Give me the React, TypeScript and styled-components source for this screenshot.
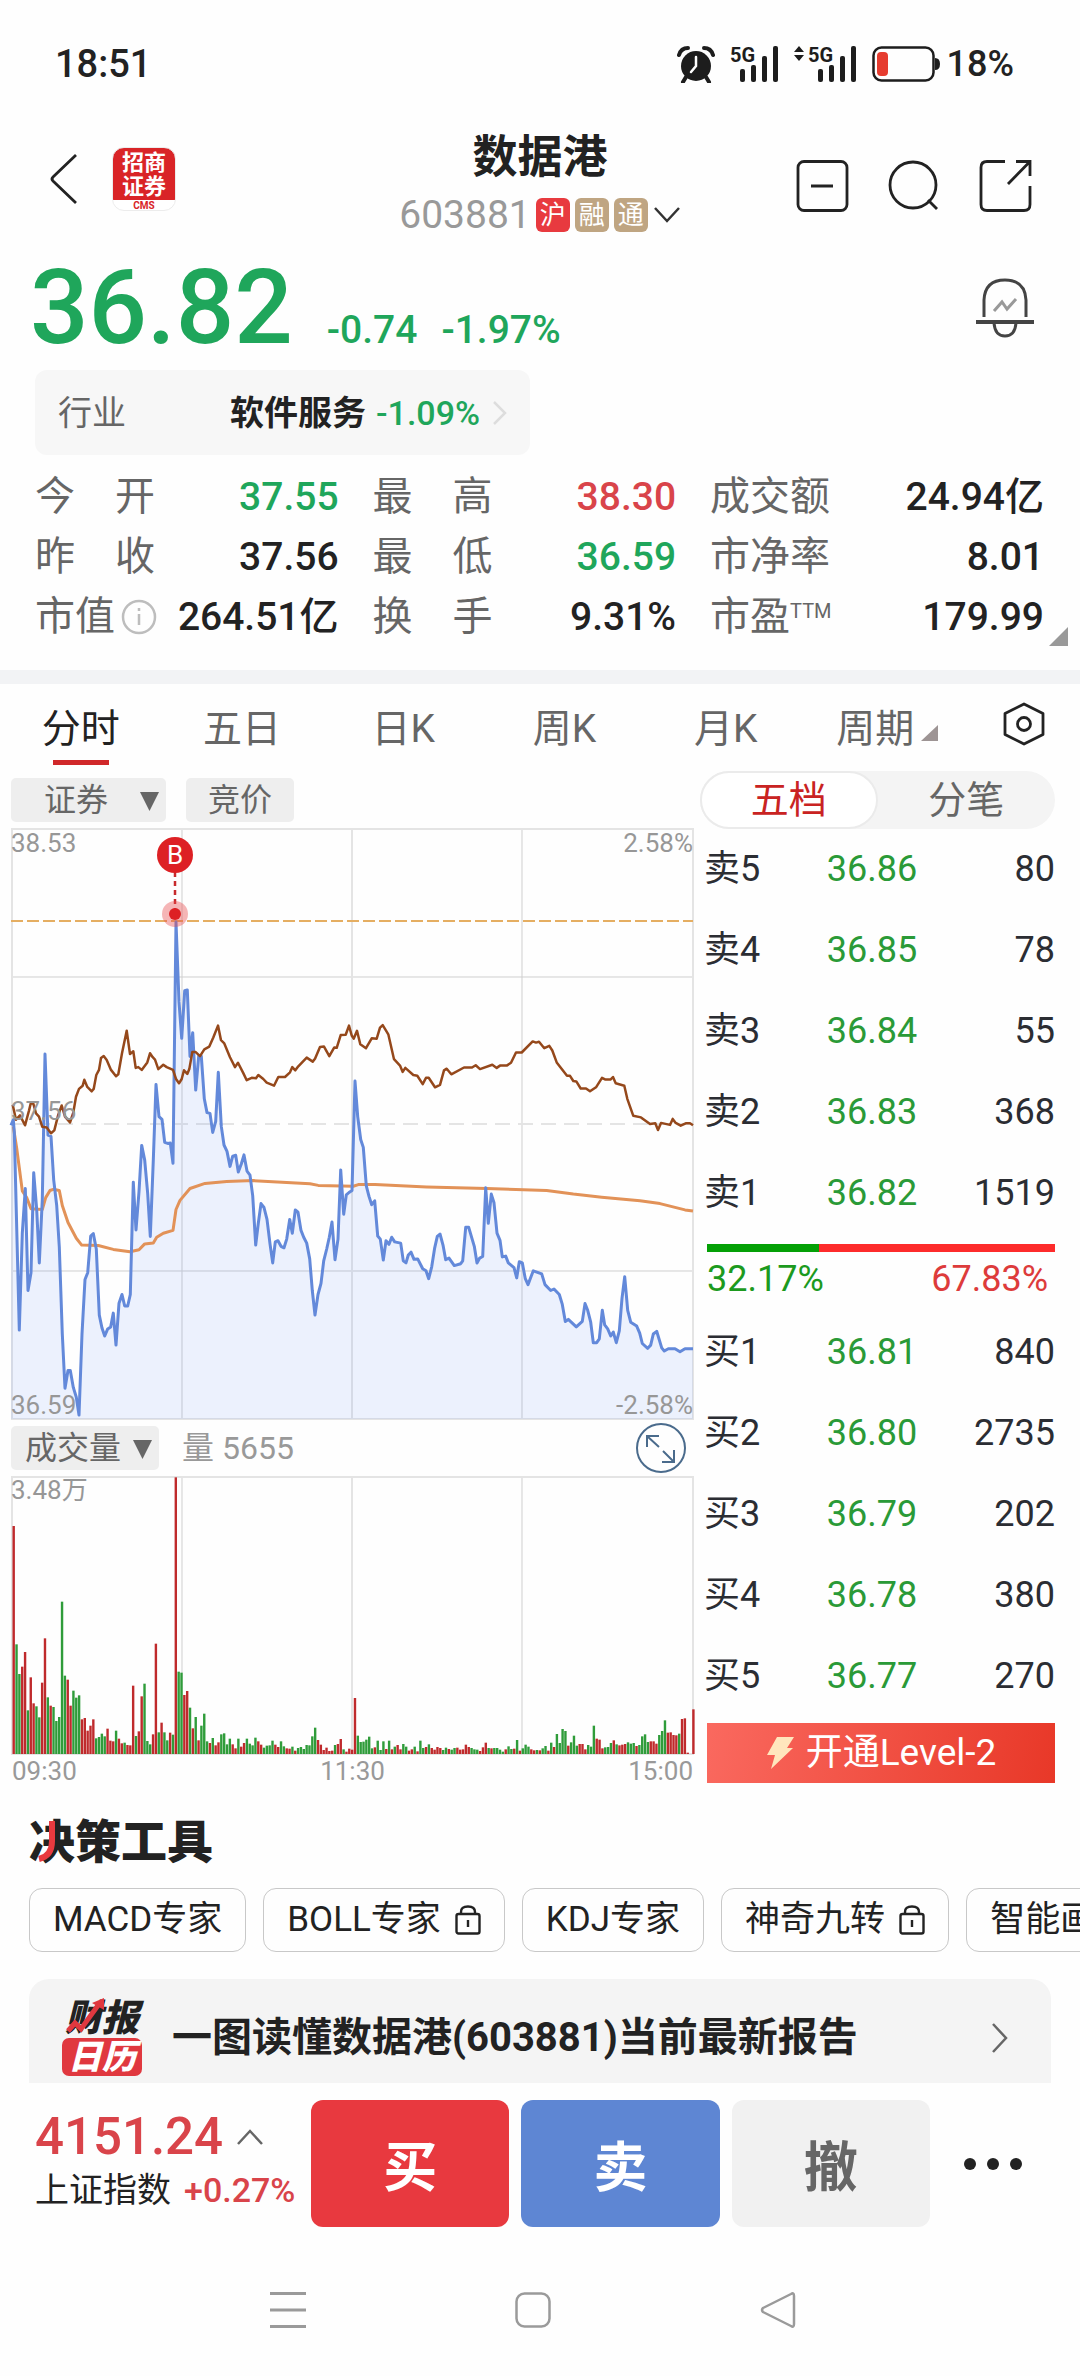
import React from "react";
import styled, { createGlobalStyle } from "styled-components";

const color = {
  ink: "#222222",
  label: "#666666",
  muted: "#999999",
  up: "#d9444a",
  down: "#1fa65b",
  bookDown: "#2a9a37",
  brand: "#e83a3f",
  line: "#e4e4e4",
};

const GlobalStyle = createGlobalStyle`
  *, *::before, *::after { box-sizing: border-box; }
  body {
    margin: 0;
    background: #fefefe;
    color: ${color.ink};
    font-family: Roboto, "Noto Sans CJK SC", sans-serif;
    overflow-x: hidden;
  }
  button, select {
    font: inherit;
    color: inherit;
    margin: 0;
    padding: 0;
    border: 0;
    background: none;
  }
  a { color: inherit; text-decoration: none; }
  svg { display: block; }
`;

const Page = styled.div`
  display: flex;
  flex-direction: column;
  overflow: hidden;
`;

/* ---------- status bar ---------- */

const StatusBar = styled.div`
  display: flex;
  align-items: center;
  justify-content: space-between;
  height: 126px;
  padding: 2px 66px 0 55px;
  font-weight: 500;
`;
const Clock = styled.time`
  font-size: 38px;
  line-height: 48px;
`;
const StatusIcons = styled.div`
  display: flex;
  align-items: center;
  gap: 15px;
`;
const BatteryGroup = styled.div`
  display: flex;
  align-items: center;
  gap: 7px;
  font-size: 36px;
  line-height: 48px;
`;

/* ---------- header ---------- */

const Header = styled.header`
  display: grid;
  grid-template-columns: 1fr auto 1fr;
  align-items: center;
  height: 120px;
  padding: 0 48px;
`;
const HeaderStart = styled.div`
  display: flex;
  align-items: center;
  gap: 34px;
  padding-bottom: 14px;
`;
const HeaderEnd = styled.div`
  display: flex;
  align-items: center;
  justify-content: flex-end;
  gap: 38px;
`;
const IconButton = styled.button`
  display: flex;
  align-items: center;
  justify-content: center;
`;
const BrokerLogo = styled.div`
  display: flex;
  flex-direction: column;
  align-items: center;
  width: 64px;
  height: 64px;
  padding-top: 3px;
  border: 1px solid #ececec;
  border-radius: 12px;
  background: linear-gradient(#d92427 0 52px, #ffffff 52px);
  color: #ffffff;
  font-size: 22px;
  font-weight: 700;
  line-height: 24px;
`;
const BrokerCode = styled.small`
  color: #d92427;
  font-size: 10px;
  font-weight: 700;
  line-height: 14px;
`;
const TitleBlock = styled.div`
  display: flex;
  flex-direction: column;
  align-items: center;
`;
const StockName = styled.h1`
  margin: 0;
  font-size: 45px;
  font-weight: 700;
  line-height: 58px;
`;
const CodeRow = styled.button`
  display: flex;
  align-items: center;
  gap: 5px;
  color: ${color.muted};
  font-size: 39px;
  line-height: 56px;
`;
const Badge = styled.span<{ $bg: string }>`
  width: 34px;
  height: 34px;
  border-radius: 6px;
  background: ${(p) => p.$bg};
  color: #ffffff;
  font-size: 26px;
  line-height: 34px;
  text-align: center;
`;

/* ---------- quote summary ---------- */

const PriceRow = styled.section`
  display: flex;
  align-items: center;
  justify-content: space-between;
  height: 124px;
  padding: 0 46px 0 30px;
`;
const PriceGroup = styled.div`
  display: flex;
  align-items: baseline;
  color: ${color.down};
  font-size: 39px;
  font-weight: 500;
  line-height: 48px;
`;
const Price = styled.strong`
  margin-right: 34px;
  font-size: 103px;
  font-weight: 500;
  line-height: 120px;
`;
const Change = styled.span`
  margin-right: 24px;
`;
const Industry = styled.a`
  display: flex;
  align-items: center;
  align-self: flex-start;
  height: 85px;
  margin-left: 35px;
  padding: 0 22px 0 23px;
  border-radius: 12px;
  background: #f7f7f7;
  font-size: 34px;
  line-height: 48px;
`;
const IndustryLabel = styled.span`
  margin-right: 104px;
  color: ${color.label};
`;
const IndustryChange = styled.span`
  margin: 0 12px 0 10px;
  color: ${color.down};
  font-weight: 500;
`;
const StatsArea = styled.section`
  position: relative;
  padding: 12px 36px 23px 35px;
  border-bottom: 14px solid #f2f3f5;
`;
const Stats = styled.dl`
  display: grid;
  grid-template-columns: 1fr 1fr 1.1fr;
  column-gap: 34px;
  margin: 0;
  font-size: 40px;
  line-height: 60px;
`;
const Stat = styled.div`
  display: flex;
  justify-content: space-between;
`;
const StatLabel = styled.dt`
  display: flex;
  align-items: center;
  justify-content: space-between;
  gap: 6px;
  min-width: 120px;
  color: ${color.label};
  sup {
    align-self: flex-start;
    font-size: 20px;
    line-height: 48px;
    margin-left: -6px;
  }
`;
const StatValue = styled.dd<{ $tone?: string }>`
  margin: 0;
  color: ${(p) => p.$tone ?? color.ink};
  font-size: 39px;
  font-weight: 500;
`;
const Corner = styled.svg`
  position: absolute;
  right: 12px;
  bottom: 24px;
`;

/* ---------- period tabs ---------- */

const Tabs = styled.nav`
  display: grid;
  grid-template-columns: repeat(6, 161fr) 112fr;
  height: 87px;
`;
const Tab = styled.button<{ $active?: boolean }>`
  display: flex;
  flex-direction: column;
  align-items: center;
  padding-top: 20px;
  color: ${(p) => (p.$active ? color.ink : color.label)};
  font-size: 39px;
  line-height: 50px;
  &::after {
    content: "";
    width: 56px;
    height: 5px;
    margin-top: 6px;
    background: ${(p) => (p.$active ? "#d0282a" : "transparent")};
  }
`;
const TabText = styled.span`
  display: flex;
  align-items: center;
  gap: 7px;
  svg { margin-top: 8px; }
`;
const SettingsButton = styled(IconButton)`
  height: 80px;
`;

/* ---------- chart + order book ---------- */

const Main = styled.main`
  display: grid;
  grid-template-columns: 683fr 355fr;
  column-gap: 6px;
  align-items: start;
  padding: 0 25px 0 11px;
`;
const ChartColumn = styled.section`
  display: flex;
  flex-direction: column;
  min-width: 0;
  padding-top: 7px;
`;
const ChipRow = styled.div`
  display: flex;
  align-items: center;
  gap: 20px;
  margin-bottom: 6px;
`;
const VolumeRow = styled.div`
  display: flex;
  align-items: center;
  gap: 23px;
  height: 50px;
  margin: 3px 0;
  padding-right: 8px;
  color: ${color.muted};
  font-size: 32px;
  line-height: 44px;
`;
const VolumeText = styled.span`
  flex: 1;
`;
const SelectChip = styled.label<{ $width: number; $indent: number }>`
  position: relative;
  width: ${(p) => p.$width}px;
  height: 44px;
  border-radius: 5px;
  background: #eeeeee;
  color: ${color.label};
  font-size: 32px;
  select {
    width: 100%;
    height: 44px;
    padding-left: ${(p) => p.$indent}px;
    appearance: none;
    line-height: 44px;
  }
  svg {
    position: absolute;
    right: 7px;
    top: 14px;
    pointer-events: none;
  }
`;
const Chip = styled.button`
  height: 44px;
  padding: 0 22px;
  border-radius: 5px;
  background: #eeeeee;
  color: ${color.label};
  font-size: 32px;
  line-height: 44px;
`;
const ChartSvg = styled.svg`
  width: 100%;
  height: auto;
  overflow: visible;
  font-size: 26px;
`;
const TimeAxis = styled.div`
  display: flex;
  justify-content: space-between;
  padding: 0 1px;
  color: ${color.muted};
  font-size: 26px;
  line-height: 32px;
`;
const BookColumn = styled.section`
  display: flex;
  flex-direction: column;
`;
const Segment = styled.div`
  display: grid;
  grid-template-columns: 1fr 1fr;
  height: 58px;
  border-radius: 29px;
  background: #f4f4f4;
`;
const SegmentItem = styled.button<{ $active?: boolean }>`
  border: 2px solid ${(p) => (p.$active ? "#ebebeb" : "transparent")};
  border-radius: 29px;
  background: ${(p) => (p.$active ? "#ffffff" : "transparent")};
  color: ${(p) => (p.$active ? "#c92322" : color.label)};
  font-size: 38px;
  line-height: 54px;
`;
const Book = styled.table`
  width: calc(100% - 4px);
  margin-left: 4px;
  border-collapse: collapse;
  table-layout: fixed;
  color: #2b2d33;
  font-size: 36px;
  line-height: 81px;
  th, td { padding: 0; font-weight: 400; text-align: left; }
  th { width: 35%; }
  td:nth-child(2) { color: ${color.bookDown}; }
  td:last-child { text-align: right; }
`;
const RatioBar = styled.div`
  display: flex;
  height: 8px;
  margin: 10px 0 0 7px;
  background: #fd2b2b;
`;
const RatioFill = styled.div`
  background: #04a006;
`;
const RatioText = styled.div`
  display: flex;
  justify-content: space-between;
  margin-bottom: 6px;
  padding: 0 7px;
  color: #1c9a1e;
  font-size: 36px;
  line-height: 54px;
  span:last-child { color: #dd3b3b; }
`;
const LevelButton = styled.button`
  display: flex;
  align-items: center;
  justify-content: center;
  gap: 12px;
  height: 60px;
  margin: 6px 0 0 7px;
  background: linear-gradient(100deg, #fa695f, #e83828);
  color: #ffffff;
  font-size: 37px;
  line-height: 60px;
`;

/* ---------- decision tools ---------- */

const Tools = styled.section`
  display: flex;
  flex-direction: column;
  padding: 27px 0 0 29px;
`;
const ToolsTitle = styled.h2`
  position: relative;
  margin: 0 0 18px;
  font-size: 46px;
  font-weight: 900;
  line-height: 56px;
`;
const TitleStroke = styled.svg`
  position: absolute;
  left: 8px;
  top: 6px;
`;
const TagRow = styled.div`
  display: flex;
  gap: 17px;
`;
const Tag = styled.button`
  display: flex;
  flex-shrink: 0;
  align-items: center;
  gap: 14px;
  height: 64px;
  padding: 0 23px;
  border: 1px solid #c8c8c8;
  border-radius: 13px;
  font-size: 35px;
  line-height: 60px;
`;
const ReportCard = styled.a`
  display: flex;
  align-items: center;
  height: 104px;
  margin: 27px 29px 0 0;
  padding: 14px 42px 0 33px;
  border-radius: 20px 20px 0 0;
  background: #f4f4f4;
  font-size: 40px;
  font-weight: 700;
  line-height: 56px;
`;
const ReportLogo = styled.div`
  position: relative;
  display: flex;
  flex-direction: column;
  align-items: center;
  width: 80px;
  margin-right: 30px;
  font-size: 37px;
  font-weight: 900;
  font-style: italic;
  line-height: 38px;
  svg {
    position: absolute;
    left: 4px;
    top: -2px;
  }
`;
const ReportLogoBox = styled.span`
  width: 80px;
  height: 38px;
  border-radius: 7px;
  background: #e0383f;
  color: #ffffff;
  font-size: 34px;
  line-height: 38px;
  text-align: center;
`;
const ReportText = styled.span`
  flex: 1;
`;

/* ---------- bottom bars ---------- */

const TradeBar = styled.footer`
  display: flex;
  gap: 12px;
  padding: 17px 36px 17px 35px;
`;
const IndexQuote = styled.div`
  flex: 0 0 264px;
  padding-top: 7px;
  white-space: nowrap;
`;
const IndexValue = styled.div`
  display: flex;
  align-items: center;
  gap: 13px;
  color: ${color.up};
  font-size: 51px;
  font-weight: 500;
  line-height: 60px;
`;
const IndexName = styled.div`
  font-size: 34px;
  line-height: 46px;
  span {
    margin-left: 13px;
    color: ${color.up};
    font-weight: 500;
  }
`;
const TradeButton = styled.button<{ $bg: string; $fg: string }>`
  flex: 1;
  height: 127px;
  border-radius: 12px;
  background: ${(p) => p.$bg};
  color: ${(p) => p.$fg};
  font-size: 54px;
  font-weight: 700;
`;
const MoreButton = styled(IconButton)`
  width: 102px;
`;
const SystemNav = styled.nav`
  display: flex;
  align-items: center;
  justify-content: center;
  gap: 209px;
  height: 132px;
  padding-right: 14px;
`;

/* ---------- chart data ---------- */

const PRICE =
  "33,772 40,758 43,790 58,1290 67,1045 76,932 84,1190 93,1145 101,892 110,985 118,1120 127,960 135,592 144,797 153,800 161,910 170,975 178,1080 187,1300 195,1437 204,1392 211,1392 220,1435 229,1460 237,1505 246,1300 255,1162 263,1145 272,1052 280,1046 289,1085 298,1252 306,1285 314,1305 323,1287 332,1282 340,1247 348,1328 357,1222 366,1200 374,1229 383,1229 391,1200 400,916 408,1037 417,940 425,823 434,860 443,945 451,1053 460,860 468,669 477,750 486,757 494,815 503,818 511,817 519,868 528,258 537,460 545,552 554,432 562,430 570,598 578,538 587,683 596,597 604,597 613,705 621,740 630,742 638,790 647,762 655,638 664,775 672,822 681,838 690,876 698,850 707,848 715,890 724,870 732,847 741,888 750,898 758,950 767,1075 775,1020 783,970 792,980 801,1010 810,1072 818,1120 826,1067 834,1064 843,1078 852,1082 860,1060 869,1010 877,1045 886,986 894,992 903,1038 911,1055 920,1070 929,1110 937,1190 945,1252 954,1200 963,1172 971,1115 980,1085 988,1055 996,1017 1005,1112 1014,1060 1022,885 1031,997 1039,948 1047,942 1056,937 1065,660 1073,750 1082,808 1090,828 1099,925 1107,952 1115,973 1124,963 1133,1052 1141,1060 1150,1113 1158,1064 1167,1073 1175,1055 1184,1067 1202,1070 1210,1115 1218,1120 1225,1100 1233,1093 1242,1111 1253,1110 1268,1135 1278,1140 1286,1160 1295,1130 1304,1082 1312,1053 1320,1047 1329,1075 1337,1112 1347,1108 1363,1127 1382,1122 1388,1115 1397,1030 1406,1030 1423,1078 1431,1120 1439,1108 1448,1104 1457,930 1465,1020 1474,946 1482,968 1491,1045 1500,1063 1507,1105 1517,1103 1525,1120 1542,1132 1550,1158 1558,1117 1567,1120 1576,1160 1584,1175 1593,1155 1600,1140 1625,1148 1635,1175 1652,1190 1662,1186 1678,1200 1687,1225 1696,1268 1705,1263 1729,1282 1747,1268 1755,1223 1763,1240 1772,1270 1780,1322 1790,1322 1798,1312 1807,1240 1814,1277 1823,1287 1832,1305 1840,1295 1849,1322 1858,1292 1866,1210 1874,1155 1883,1240 1892,1270 1910,1280 1919,1298 1927,1324 1943,1336 1952,1328 1960,1300 1970,1293 1985,1335 1993,1343 2005,1337 2025,1337 2040,1345 2055,1337 2079,1337";
const AVERAGE =
  "40,775 50,830 58,880 67,938 80,955 93,983 127,985 137,955 150,937 160,934 178,937 187,975 204,1018 229,1058 245,1075 295,1076 340,1086 390,1092 417,1087 434,1072 460,1070 470,1055 490,1045 519,1038 528,985 540,962 570,932 615,919 680,914 760,912 860,917 930,920 955,924 1060,926 1075,922 1125,922 1280,928 1460,932 1640,937 1720,946 1805,954 1920,963 1980,970 2055,986 2079,989";
const INDEX =
  "38,720 48,758 60,747 75,772 87,735 92,717 100,717 108,742 117,750 127,776 140,778 153,792 163,785 175,745 185,722 195,750 210,765 220,740 228,700 237,680 248,672 253,657 262,675 275,686 281,680 289,645 297,632 303,602 311,597 320,607 333,632 348,648 355,643 366,590 380,533 390,592 400,585 407,627 415,625 425,632 442,613 450,590 458,600 465,606 475,630 490,619 500,625 519,632 528,655 537,666 545,655 552,633 562,642 568,630 577,587 587,587 600,597 613,580 628,573 640,550 654,520 663,557 673,565 690,600 705,625 714,614 730,640 740,658 755,652 768,653 775,645 790,655 800,664 822,672 835,650 855,650 870,638 877,625 886,633 895,623 920,601 938,611 945,604 960,574 972,573 988,597 1003,575 1010,576 1022,544 1037,543 1047,520 1055,545 1061,553 1071,533 1081,567 1098,577 1115,552 1130,553 1140,525 1148,519 1165,542 1182,605 1200,621 1208,637 1216,627 1240,645 1252,647 1268,668 1278,652 1286,652 1305,676 1320,670 1332,633 1340,629 1354,643 1392,626 1416,626 1427,620 1440,630 1477,619 1490,627 1500,621 1520,621 1533,614 1548,588 1565,588 1598,560 1608,563 1617,561 1633,577 1648,571 1657,583 1670,613 1701,647 1710,647 1720,660 1729,661 1742,679 1758,679 1770,686 1788,676 1806,652 1815,656 1832,656 1839,650 1847,666 1873,672 1882,705 1900,748 1923,752 1950,769 1966,767 1974,784 1983,766 2010,771 2018,756 2027,766 2042,773 2057,767 2070,767 2079,772";

// One entry per minute: r = closed up, g = closed down, followed by the volume.
const VOLUME =
  "r684 g329 g240 r262 r306 g131 r230 r152 g143 g110 r214 r347 g170 r145 g141 g99 g111 g457 g235 r223 r145 g190 g169 g176 r104 r108 r70 r85 r104 g47 g51 g61 g53 r76 r40 r38 g70 r46 r32 g34 r27 r26 r205 g54 r68 r173 g211 g39 g29 r59 r331 g65 r94 g65 g41 r64 g58 r830 g247 g244 r177 r189 g139 r77 g111 r41 g85 g121 g38 r33 g48 r26 r35 g59 g62 g29 g46 r29 r17 g46 r22 r33 g46 g31 g26 g49 r38 r28 g19 g25 g26 g40 r28 r21 g38 g23 r17 r16 g22 r10 g18 g21 g15 g27 g26 g53 g79 r42 r28 r12 r19 r9 r10 g27 r30 r45 g14 r7 r16 r13 r168 g55 g36 g37 g43 g52 g17 r20 g40 g12 g38 r15 g40 r14 g22 r27 r14 g30 g22 r10 r14 g22 r8 g40 g18 r21 g29 r18 r13 r21 r18 g12 g19 r15 g13 g18 r19 r13 r14 r28 r21 g18 g14 g13 r9 r20 r34 g18 r17 g18 g18 g13 g7 r14 g23 g15 r16 g42 r10 g17 g28 g22 r14 r11 g12 r11 g17 g24 r10 g34 r21 g60 g33 g75 g69 r25 g35 g55 g25 r30 r30 r14 g27 g22 g85 r46 r43 r17 g20 g21 g33 r41 g29 r26 r28 r30 g35 g31 g33 r24 g27 g53 g59 g36 r38 r38 r31 g57 g69 g101 r64 r65 r57 r56 g61 r105 r107 r4 r0 r134";

const plot = (data: string) =>
  data
    .split(" ")
    .map((pair) => {
      const [x, y] = pair.split(",").map(Number);
      return `${(x / 3 - 11).toFixed(1)},${(y / 2.529 - 8).toFixed(1)}`;
    })
    .join(" ");

const PriceChart = () => {
  const price = plot(PRICE);
  return (
    <ChartSvg viewBox="0 0 683 592" role="img" aria-label="分时走势">
      <path d="M171 1V591M511 1V591M1 149H682M1 443H682" stroke="#cfcfcf" strokeWidth="1" fill="none" />
      <path d="M341 1V591" stroke="#e4e4e4" strokeWidth="2" />
      <path d="M1 296H682" stroke="#e4e4e4" strokeWidth="2" strokeDasharray="15 8" />
      <rect x="1" y="1" width="681" height="590" fill="none" stroke={color.line} strokeWidth="2" />
      <polygon points={`0,591 ${price} 682,591`} fill="#5c8cf5" fillOpacity="0.11" />
      <path d="M0 93H682" stroke="#e5ae62" strokeWidth="2" strokeDasharray="12 4" />
      <polyline points={plot(AVERAGE)} fill="none" stroke="#e29258" strokeWidth="3" strokeLinejoin="round" />
      <polyline points={price} fill="none" stroke="#6389da" strokeWidth="3" strokeLinejoin="round" />
      <polyline points={plot(INDEX)} fill="none" stroke="#95481b" strokeWidth="2.5" strokeLinejoin="round" />
      <g fill="#979797">
        <text x="0" y="24">38.53</text>
        <text x="0" y="292">37.56</text>
        <text x="0" y="586">36.59</text>
        <text x="682" y="24" textAnchor="end">2.58%</text>
        <text x="682" y="586" textAnchor="end">-2.58%</text>
      </g>
      <path d="M164 44V86" stroke="#c82a2c" strokeWidth="2.5" strokeDasharray="5 4" />
      <circle cx="164" cy="86" r="13" fill="#e8484c" fillOpacity="0.4" />
      <circle cx="164" cy="86" r="6" fill="#dd2024" />
      <circle cx="164" cy="27" r="18" fill="#dd2024" />
      <text x="164" y="36" textAnchor="middle" fill="#ffffff">B</text>
    </ChartSvg>
  );
};

const VolumeChart = () => (
  <ChartSvg viewBox="0 0 683 279" role="img" aria-label="成交量">
    <path d="M171 1V278M511 1V278" stroke="#cfcfcf" strokeWidth="1" />
    <path d="M341 1V278" stroke="#e4e4e4" strokeWidth="2" />
    <rect x="1" y="1" width="681" height="277" fill="none" stroke={color.line} strokeWidth="2" />
    {VOLUME.split(" ").map((bar, i) => {
      const h = Number(bar.slice(1)) / 3;
      return (
        <rect
          key={i}
          x={1.5 + i * 2.844}
          y={278 - h}
          width="2.4"
          height={h}
          fill={bar[0] === "r" ? "#bf2a2c" : "#2f9c3a"}
        />
      );
    })}
    <text x="0" y="23" fill="#979797">3.48万</text>
  </ChartSvg>
);

/* ---------- icons ---------- */

const Signal = ({ roaming }: { roaming?: boolean }) => (
  <svg width={roaming ? 63 : 49} height="38" viewBox={roaming ? "-14 0 63 38" : "0 0 49 38"} fill="#1d1d1d" overflow="visible">
    <text x="0" y="17" fontSize="20" fontWeight="700">5G</text>
    <rect x="10" y="24" width="5" height="13" rx="2" />
    <rect x="21" y="20" width="5" height="17" rx="2" />
    <rect x="32" y="11" width="5" height="26" rx="2" />
    <rect x="43" y="1" width="5" height="36" rx="2" />
    {roaming && <path d="M-9 1l5 6h-10zM-9 16l5-6h-10z" />}
  </svg>
);

const Alarm = () => (
  <svg width="38" height="38" viewBox="0 0 38 38">
    <circle cx="19" cy="21" r="15" fill="#1d1d1d" />
    <path d="M2 10Q4 3 11 3M36 10Q34 3 27 3" stroke="#1d1d1d" strokeWidth="4" strokeLinecap="round" fill="none" />
    <path d="M9 32l-3 5M29 32l3 5" stroke="#1d1d1d" strokeWidth="4" strokeLinecap="round" />
    <path d="M19 12v9l-5 6" stroke="#ffffff" strokeWidth="2.5" fill="none" strokeLinecap="round" />
  </svg>
);

const Battery = () => (
  <svg width="68" height="36" viewBox="0 0 68 36">
    <rect x="1.5" y="1.5" width="60" height="33" rx="8" fill="none" stroke="#1d1d1d" strokeWidth="2.5" />
    <rect x="5" y="6" width="11" height="24" rx="4" fill="#e63c2f" />
    <path d="M63 12q5 0 5 6t-5 6z" fill="#1d1d1d" />
  </svg>
);

const Lock = () => (
  <svg width="26" height="30" viewBox="0 0 26 30" fill="none" stroke="#222222" strokeWidth="2.4">
    <rect x="1.5" y="9" width="23" height="19.5" rx="2" />
    <path d="M6 9V7q0-5.5 7-5.5t7 5.5v2M13 15v7" />
  </svg>
);

const Down = () => (
  <svg width="19" height="19" viewBox="0 0 19 19">
    <path d="M0 0h19l-9.5 19z" fill="#666666" />
  </svg>
);

/* ---------- content ---------- */

type StatItem = { label: React.ReactNode; value: string; tone?: string };
const spaced = (a: string, b: string) => (
  <>
    <span>{a}</span>
    <span>{b}</span>
  </>
);
const stats: StatItem[] = [
  { label: spaced("今", "开"), value: "37.55", tone: color.down },
  { label: spaced("最", "高"), value: "38.30", tone: color.up },
  { label: "成交额", value: "24.94亿" },
  { label: spaced("昨", "收"), value: "37.56" },
  { label: spaced("最", "低"), value: "36.59", tone: color.down },
  { label: "市净率", value: "8.01" },
  {
    label: (
      <>
        市值
        <svg width="36" height="36" viewBox="0 0 36 36" fill="none" stroke="#bdbdbd" strokeWidth="2.5">
          <circle cx="18" cy="18" r="16" />
          <path d="M18 15v11M18 9v3" />
        </svg>
      </>
    ),
    value: "264.51亿",
  },
  { label: spaced("换", "手"), value: "9.31%" },
  {
    label: (
      <>
        市盈<sup>TTM</sup>
      </>
    ),
    value: "179.99",
  },
];

type Level = [string, string, string];
const asks: Level[] = [
  ["卖5", "36.86", "80"],
  ["卖4", "36.85", "78"],
  ["卖3", "36.84", "55"],
  ["卖2", "36.83", "368"],
  ["卖1", "36.82", "1519"],
];
const bids: Level[] = [
  ["买1", "36.81", "840"],
  ["买2", "36.80", "2735"],
  ["买3", "36.79", "202"],
  ["买4", "36.78", "380"],
  ["买5", "36.77", "270"],
];
const buyRatio = 32.17;

const BookTable = ({ rows, label }: { rows: Level[]; label: string }) => (
  <Book aria-label={label}>
    <tbody>
      {rows.map(([name, price, size]) => (
        <tr key={name}>
          <th scope="row">{name}</th>
          <td>{price}</td>
          <td>{size}</td>
        </tr>
      ))}
    </tbody>
  </Book>
);

const tools = [
  { name: "MACD专家" },
  { name: "BOLL专家", locked: true },
  { name: "KDJ专家" },
  { name: "神奇九转", locked: true },
  { name: "智能画线" },
];

export default function App() {
  return (
    <Page>
      <GlobalStyle />

      <StatusBar>
        <Clock>18:51</Clock>
        <StatusIcons>
          <Alarm />
          <Signal />
          <Signal roaming />
          <BatteryGroup>
            <Battery />
            <span>18%</span>
          </BatteryGroup>
        </StatusIcons>
      </StatusBar>

      <Header>
        <HeaderStart>
          <IconButton aria-label="返回">
            <svg width="30" height="52" viewBox="0 0 30 52" fill="none" stroke="#222222" strokeWidth="2.8">
              <path d="M28 2L5 24q-2 2 0 4l23 22" />
            </svg>
          </IconButton>
          <BrokerLogo>
            <span>招商</span>
            <span>证券</span>
            <BrokerCode>CMS</BrokerCode>
          </BrokerLogo>
        </HeaderStart>
        <TitleBlock>
          <StockName>数据港</StockName>
          <CodeRow>
            603881
            <Badge $bg="#e83a3f">沪</Badge>
            <Badge $bg="#bfa582">融</Badge>
            <Badge $bg="#bfa582">通</Badge>
            <svg width="28" height="18" viewBox="0 0 28 18" fill="none" stroke="#333333" strokeWidth="2.5">
              <path d="M2 2l12 13L26 2" />
            </svg>
          </CodeRow>
        </TitleBlock>
        <HeaderEnd>
          <IconButton aria-label="移出自选">
            <svg width="54" height="52" viewBox="0 0 54 52" fill="none" stroke="#222222" strokeWidth="2.8">
              <rect x="2" y="1.5" width="49" height="49" rx="6" />
              <path d="M15 26h22" strokeWidth="3" />
            </svg>
          </IconButton>
          <IconButton aria-label="搜索">
            <svg width="52" height="52" viewBox="0 0 52 52" fill="none" stroke="#222222" strokeWidth="2.8">
              <circle cx="25" cy="25" r="23" />
              <path d="M40 40l9 9" />
            </svg>
          </IconButton>
          <IconButton aria-label="分享">
            <svg width="54" height="52" viewBox="0 0 54 52" fill="none" stroke="#222222" strokeWidth="2.8">
              <path d="M27 1.5H9q-6 0-6 6v37q0 6 6 6h37q6 0 6-6V26" />
              <path d="M38 1.5h14V16M51 2.5L30 24" />
            </svg>
          </IconButton>
        </HeaderEnd>
      </Header>

      <PriceRow>
        <PriceGroup>
          <Price>36.82</Price>
          <Change>-0.74</Change>
          <Change>-1.97%</Change>
        </PriceGroup>
        <IconButton aria-label="股价提醒">
          <svg width="58" height="60" viewBox="0 0 58 60" fill="none" stroke="#444444" strokeWidth="3">
            <path d="M8 39V22Q9 2 29 2t21 20v17" />
            <path d="M0 44h58" strokeWidth="4" />
            <path d="M18 45q1 13 11 13t11-13" />
            <path d="M18 33l8-9 5 7 9-10" stroke="#999999" />
          </svg>
        </IconButton>
      </PriceRow>

      <Industry href="#industry">
        <IndustryLabel>行业</IndustryLabel>
        <strong>软件服务</strong>
        <IndustryChange>-1.09%</IndustryChange>
        <svg width="16" height="26" viewBox="0 0 16 26" fill="none" stroke="#dddddd" strokeWidth="2.5">
          <path d="M2 2l11 11L2 24" />
        </svg>
      </Industry>

      <StatsArea>
        <Stats>
          {stats.map((s) => (
            <Stat key={s.value}>
              <StatLabel>{s.label}</StatLabel>
              <StatValue $tone={s.tone}>{s.value}</StatValue>
            </Stat>
          ))}
        </Stats>
        <Corner width="19" height="19" viewBox="0 0 19 19">
          <path d="M19 0v19H0z" fill="#999999" />
        </Corner>
      </StatsArea>

      <Tabs>
        <Tab $active>分时</Tab>
        <Tab>五日</Tab>
        <Tab>日K</Tab>
        <Tab>周K</Tab>
        <Tab>月K</Tab>
        <Tab>
          <TabText>
            周期
            <svg width="17" height="16" viewBox="0 0 17 16">
              <path d="M17 0v16H0z" fill="#9d9494" />
            </svg>
          </TabText>
        </Tab>
        <SettingsButton aria-label="设置">
          <svg width="42" height="44" viewBox="0 0 42 44" fill="none" stroke="#222222" strokeWidth="2.8" strokeLinejoin="round">
            <path d="M21 2l19 9.500v21L21 42 2 32.500v-21z" />
            <circle cx="21" cy="22" r="6.5" />
          </svg>
        </SettingsButton>
      </Tabs>

      <Main>
        <ChartColumn>
          <ChipRow>
            <SelectChip $width={155} $indent={33}>
              <select aria-label="叠加">
                <option>证券</option>
              </select>
              <Down />
            </SelectChip>
            <Chip>竞价</Chip>
          </ChipRow>
          <PriceChart />
          <VolumeRow>
            <SelectChip $width={148} $indent={14}>
              <select aria-label="副图指标">
                <option>成交量</option>
              </select>
              <Down />
            </SelectChip>
            <VolumeText>量 5655</VolumeText>
            <IconButton aria-label="全屏">
              <svg width="50" height="50" viewBox="0 0 50 50" fill="none" stroke="#4a6b8c" strokeWidth="2">
                <circle cx="25" cy="25" r="24" />
                <path d="M11 24V13h12M11 13l12 11M38 27v12H26M38 39L27 28" />
              </svg>
            </IconButton>
          </VolumeRow>
          <VolumeChart />
          <TimeAxis>
            <span>09:30</span>
            <span>11:30</span>
            <span>15:00</span>
          </TimeAxis>
        </ChartColumn>

        <BookColumn>
          <Segment>
            <SegmentItem $active>五档</SegmentItem>
            <SegmentItem>分笔</SegmentItem>
          </Segment>
          <BookTable rows={asks} label="卖盘" />
          <RatioBar>
            <RatioFill style={{ width: `${buyRatio}%` }} />
          </RatioBar>
          <RatioText>
            <span>{buyRatio}%</span>
            <span>67.83%</span>
          </RatioText>
          <BookTable rows={bids} label="买盘" />
          <LevelButton>
            <svg width="28" height="32" viewBox="0 0 28 32">
              <path d="M11 0h17l-7 11h6L5 32l4-14H1z" fill="#ffe6bd" />
            </svg>
            开通Level-2
          </LevelButton>
        </BookColumn>
      </Main>

      <Tools>
        <ToolsTitle>
          决策工具
          <TitleStroke width="24" height="46" viewBox="0 0 24 46">
            <path d="M15 1v20Q15 36 2 39" fill="none" stroke="#e83a3f" strokeWidth="6" />
          </TitleStroke>
        </ToolsTitle>
        <TagRow>
          {tools.map((t) => (
            <Tag key={t.name}>
              {t.name}
              {t.locked && <Lock />}
            </Tag>
          ))}
        </TagRow>
        <ReportCard href="#report">
          <ReportLogo>
            <span>财报</span>
            <ReportLogoBox>日历</ReportLogoBox>
            <svg width="42" height="38" viewBox="0 0 42 38" fill="none" stroke="#e0383f">
              <path d="M2 33l7-8 6 6L33 6" strokeWidth="5" />
              <path d="M26 5l12-5v12z" fill="#e0383f" stroke="none" />
            </svg>
          </ReportLogo>
          <ReportText>一图读懂数据港(603881)当前最新报告</ReportText>
          <svg width="18" height="30" viewBox="0 0 18 30" fill="none" stroke="#666666" strokeWidth="2.5">
            <path d="M2 1l13 14L2 29" />
          </svg>
        </ReportCard>
      </Tools>

      <TradeBar>
        <IndexQuote>
          <IndexValue>
            4151.24
            <svg width="28" height="18" viewBox="0 0 28 18" fill="none" stroke="#666666" strokeWidth="2.5">
              <path d="M2 16L14 3l12 13" />
            </svg>
          </IndexValue>
          <IndexName>
            上证指数<span>+0.27%</span>
          </IndexName>
        </IndexQuote>
        <TradeButton $bg="#e8393f" $fg="#ffffff">买</TradeButton>
        <TradeButton $bg="#5e86d3" $fg="#ffffff">卖</TradeButton>
        <TradeButton $bg="#f1f1f1" $fg="#666666">撤</TradeButton>
        <MoreButton aria-label="更多">
          <svg width="58" height="12" viewBox="0 0 58 12" fill="#222222">
            <circle cx="6" cy="6" r="6" />
            <circle cx="29" cy="6" r="6" />
            <circle cx="52" cy="6" r="6" />
          </svg>
        </MoreButton>
      </TradeBar>

      <SystemNav>
        <IconButton aria-label="最近任务">
          <svg width="36" height="38" viewBox="0 0 36 38" stroke="#9a9a9a" strokeWidth="3">
            <path d="M0 2.500h36M0 19h36M0 35.500h36" />
          </svg>
        </IconButton>
        <IconButton aria-label="主屏幕">
          <svg width="36" height="36" viewBox="0 0 36 36" fill="none" stroke="#9a9a9a" strokeWidth="2.5">
            <rect x="1.5" y="1.5" width="33" height="33" rx="8" />
          </svg>
        </IconButton>
        <IconButton aria-label="系统返回">
          <svg width="36" height="38" viewBox="0 0 36 38" fill="none" stroke="#9a9a9a" strokeWidth="2.5" strokeLinejoin="round">
            <path d="M34 5q0-4-3-2L3 17q-2 2 0 4l28 14q3 2 3-2z" />
          </svg>
        </IconButton>
      </SystemNav>
    </Page>
  );
}
